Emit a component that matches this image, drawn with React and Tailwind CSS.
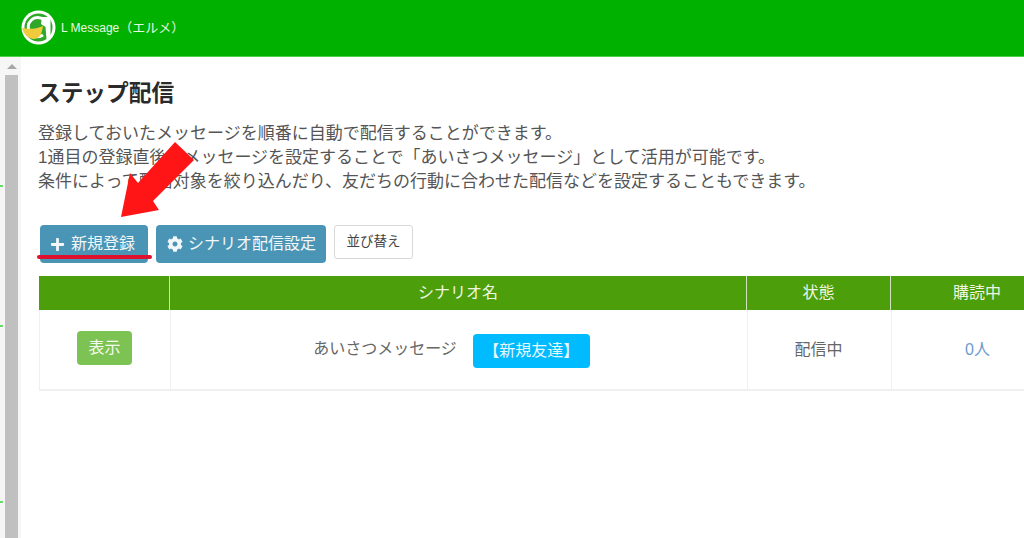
import { FaCog, FaPlus } from "react-icons/fa";

const jp = "font-['Liberation_Sans','Noto_Sans_CJK_JP',sans-serif]";

const Logo = () => (
  <svg width="35" height="35" viewBox="0 0 35 35" className="shrink-0">
    <circle cx="17.5" cy="17.5" r="17" fill="#fff" />
    <circle cx="17.5" cy="17.5" r="14" fill="#2fa82a" />
    <path d="M23 10a9.500 9.500 0 1 0 -1 15" fill="none" stroke="#fff" strokeWidth="3" />
    <path d="M21 7h8.500v22h-4l-1-12-4.500-3z" fill="#fff" />
    <path d="M1 18c7 1.500 14 1 21-2-1 8-4 13-9 13C8 29 3 25 1 18z" fill="#f2cb3c" />
  </svg>
);

const Sidebar = () => (
  <div className="relative w-[21px] shrink-0 bg-[#f6f6f6] pl-[5px] pr-[3px]">
    <div className="flex h-[18px] items-center justify-center">
      <div className="h-0 w-0 border-x-[5px] border-b-[5px] border-x-transparent border-b-[#a8a8a8]" />
    </div>
    <div className="h-[464px] bg-[#c0c0c0]" />
    <div className="absolute left-0 top-[128px] h-[2px] w-[3px] bg-[#66dd66]" />
    <div className="absolute left-0 top-[268px] h-[2px] w-[3px] bg-[#66dd66]" />
    <div className="absolute left-0 top-[444px] h-[2px] w-[3px] bg-[#66dd66]" />
  </div>
);

const Arrow = () => (
  <svg
    width="90"
    height="90"
    viewBox="0 0 90 90"
    className="pointer-events-none absolute left-[116px] top-[138px]"
  >
    <polygon points="59,4 78,22 37,63 43,72 5,79 14,35 22,45" fill="#ff1515" />
  </svg>
);

export default function App() {
  return (
    <div className={`${jp} relative flex h-[538px] w-[1024px] flex-col overflow-hidden bg-white [text-spacing-trim:space-all]`}>
      <header className="flex h-[57px] shrink-0 items-center gap-[5px] border-b border-[#4fd04a] bg-[#00b100] pb-px pl-[21px]">
        <Logo />
        <span className="text-[12px] text-[#e8f8e4]">
          L Message<span className="text-[13px]">（エルメ）</span>
        </span>
      </header>

      <div className="flex min-h-0 flex-1">
        <Sidebar />
        <main className="min-w-0 flex-1 overflow-hidden pl-[18px] pt-[22px]">
          <h1 className="ml-[-1px] text-[22.7px] leading-[28px] font-bold text-[#2a2a2a]">ステップ配信</h1>

          <div className="ml-[-1px] mt-[15px] whitespace-nowrap text-[17px] leading-[24px] text-[#555555]">
            <p>登録しておいたメッセージを順番に自動で配信することができます。</p>
            <p>1通目の登録直後のメッセージを設定することで「あいさつメッセージ」として活用が可能です。</p>
            <p>条件によって配信対象を絞り込んだり、友だちの行動に合わせた配信などを設定することもできます。</p>
          </div>

          <div className="mt-[31px] flex items-start">
            <div className="relative ml-[1px]">
              <button className="flex h-[38px] w-[108px] items-center gap-[6px] rounded-[4px] bg-[#4a95b5] pl-[10px] text-[16px] text-[#f2f7f9]">
                <FaPlus size={15} />
                新規登録
              </button>
              <div className="absolute left-[-3px] top-[30px] h-[4px] w-[115px] rounded-full bg-[#e0102f]" />
            </div>
            <button className="ml-[8px] flex h-[38px] w-[170px] items-center gap-[5px] rounded-[4px] bg-[#4a95b5] pl-[11px] text-[16px] text-[#f2f7f9]">
              <FaCog size={16} />
              シナリオ配信設定
            </button>
            <button className="ml-[8px] h-[34px] w-[79px] rounded-[3px] border border-[#d8d8d8] bg-white text-[13.5px] text-[#444444]">
              並び替え
            </button>
          </div>

          <div className="mt-[13px] w-[1010px] text-[16px]">
            <div className="grid h-[34px] grid-cols-[130px_577px_144px_1fr] bg-[#4c9e0b] text-[#eef6e2]">
              <div />
              <div className="flex items-center justify-center border-l border-[#cfe3bd]">シナリオ名</div>
              <div className="flex items-center justify-center border-l border-[#cfe3bd]">状態</div>
              <div className="flex items-center border-l border-[#cfe3bd] pl-[62px]">購読中</div>
            </div>
            <div className="grid h-[81px] grid-cols-[130px_577px_144px_1fr] border-b-2 border-l border-[#f0f0f0] text-[#666666]">
              <div className="flex items-start justify-center pr-px pt-[21px]">
                <span className="flex h-[34px] w-[55px] items-center justify-center rounded-[4px] bg-[#7cc354] text-[#f4faef]">
                  表示
                </span>
              </div>
              <div className="flex items-start justify-center gap-[16px] border-l border-[#f0f0f0] pr-[15px] pt-[24px]">
                <span className="leading-[30px]">あいさつメッセージ</span>
                <span className="flex h-[34px] w-[117px] items-center justify-center rounded-[4px] bg-[#00bbff] text-[#e8f8ff]">
                  【新規友達】
                </span>
              </div>
              <div className="flex items-center justify-center border-l border-[#f0f0f0] pr-[2px]">配信中</div>
              <div className="flex items-center border-l border-[#f0f0f0] pl-[73px] text-[#6b9bcf]">0人</div>
            </div>
          </div>
        </main>
      </div>
      <Arrow />
    </div>
  );
}
